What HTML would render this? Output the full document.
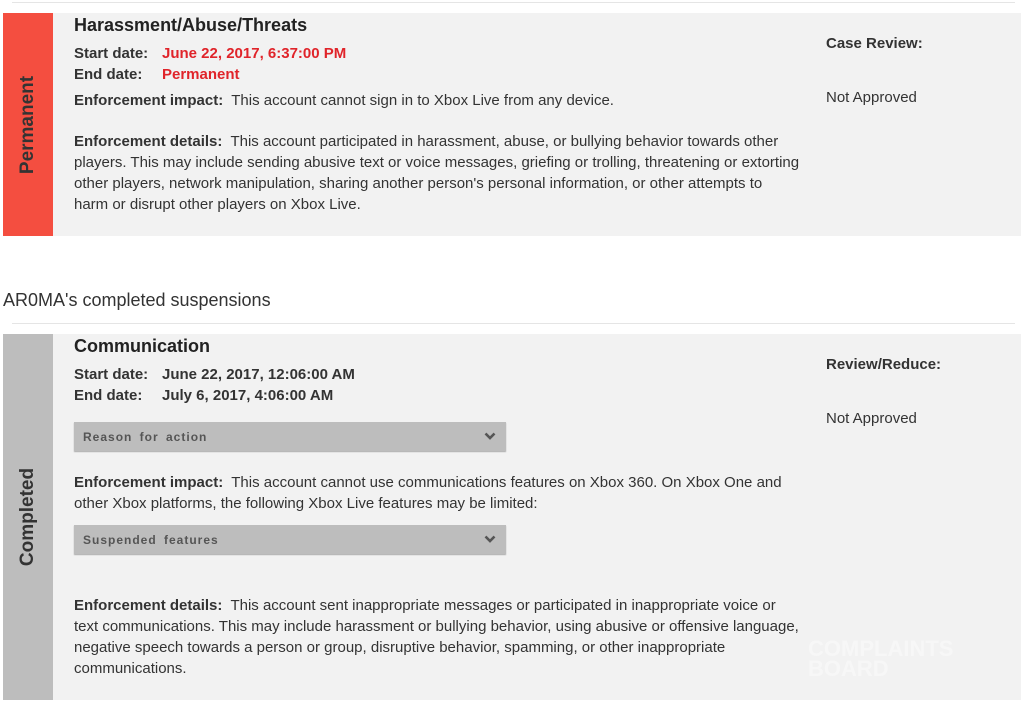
<!DOCTYPE html>
<html><head><meta charset="utf-8"><style>
*{margin:0;padding:0;box-sizing:border-box}
body{width:1028px;height:705px;background:#fff;font-family:"Liberation Sans",sans-serif;color:#333;font-size:15px;position:relative;overflow:hidden}
.abs{position:absolute}
.card{position:absolute;left:3px;width:1018px;background:#f2f2f2}
.stripe{position:absolute;left:0;top:0;bottom:0;width:50px}
.stripe span{position:absolute;left:25px;top:50%;transform:translate(-50%,-50%) rotate(-90deg);font-weight:bold;font-size:19px;color:#333;white-space:nowrap}
.t{position:absolute;left:71px;line-height:21px;white-space:nowrap}
b{font-weight:bold}
.title{font-size:18px;font-weight:bold;color:#222}
.red{color:#e0242a;font-weight:bold}
.dd{position:absolute;left:71px;width:432px;height:29px;background:#bdbdbd;font-size:12px;font-weight:bold;color:#555;letter-spacing:1px;word-spacing:3px;padding:8px 0 0 9px;box-shadow:0 1px 1px #aaa}
.dd svg{position:absolute;right:10px;top:10px}
</style></head><body>
<div class="abs" style="left:12px;top:2px;width:1003px;height:1px;background:#e5e5e5"></div>
<div class="card" style="top:13px;height:223px">
<div class="stripe" style="background:#f44e40"><span>Permanent</span></div>
<div class="t title" style="top:2px">Harassment/Abuse/Threats</div>
<div class="t" style="top:30px"><b>Start date:</b><span class="red" style="position:absolute;left:88px">June 22, 2017, 6:37:00 PM</span></div>
<div class="t" style="top:51px"><b>End date:</b><span class="red" style="position:absolute;left:88px">Permanent</span></div>
<div class="t" style="top:77px"><b>Enforcement impact:</b>&nbsp; This account cannot sign in to Xbox Live from any device.</div>
<div class="t" style="top:118px"><b>Enforcement details:</b>&nbsp; This account participated in harassment, abuse, or bullying behavior towards other<br>players. This may include sending abusive text or voice messages, griefing or trolling, threatening or extorting<br>other players, network manipulation, sharing another person's personal information, or other attempts to<br>harm or disrupt other players on Xbox Live.</div>
<div class="abs" style="left:823px;top:22px;font-weight:bold">Case Review:</div>
<div class="abs" style="left:823px;top:76px">Not Approved</div>
</div>
<div class="abs" style="left:3px;top:290px;font-size:18px;color:#333">AR0MA's completed suspensions</div>
<div class="abs" style="left:12px;top:323px;width:1003px;height:1px;background:#e5e5e5"></div>
<div class="card" style="top:334px;height:366px">
<div class="stripe" style="background:#bdbdbd"><span>Completed</span></div>
<div class="t title" style="top:2px">Communication</div>
<div class="t" style="top:30px"><b>Start date:</b><span style="position:absolute;left:88px;font-weight:bold">June 22, 2017, 12:06:00 AM</span></div>
<div class="t" style="top:51px"><b>End date:</b><span style="position:absolute;left:88px;font-weight:bold">July 6, 2017, 4:06:00 AM</span></div>
<div class="dd" style="top:88px">Reason for action<svg width="12" height="8" viewBox="0 0 12 8"><path d="M1.5 1.5L6 6L10.5 1.5" stroke="#555" stroke-width="2.6" fill="none"/></svg></div>
<div class="t" style="top:138px"><b>Enforcement impact:</b>&nbsp; This account cannot use communications features on Xbox 360. On Xbox One and<br>other Xbox platforms, the following Xbox Live features may be limited:</div>
<div class="dd" style="top:191px">Suspended features<svg width="12" height="8" viewBox="0 0 12 8"><path d="M1.5 1.5L6 6L10.5 1.5" stroke="#555" stroke-width="2.6" fill="none"/></svg></div>
<div class="t" style="top:261px"><b>Enforcement details:</b>&nbsp; This account sent inappropriate messages or participated in inappropriate voice or<br>text communications. This may include harassment or bullying behavior, using abusive or offensive language,<br>negative speech towards a person or group, disruptive behavior, spamming, or other inappropriate<br>communications.</div>
<div class="abs" style="left:823px;top:22px;font-weight:bold">Review/Reduce:</div>
<div class="abs" style="left:823px;top:76px">Not Approved</div>
<div class="abs" style="left:805px;top:305px;font-size:22px;line-height:20px;font-weight:bold;color:#f7f7f7">COMPLAINTS<br>BOARD</div>
</div>
</body></html>
